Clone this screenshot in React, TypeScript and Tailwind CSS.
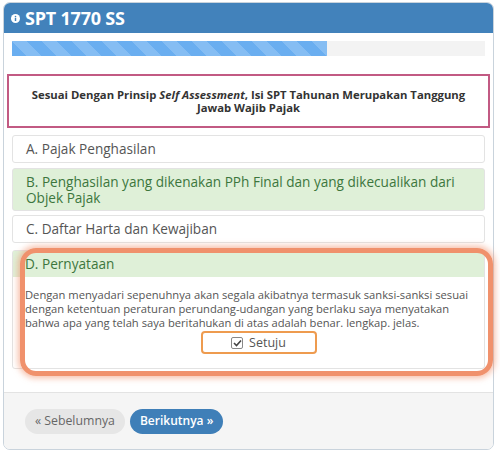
const rowBase = "border border-[#e3e3e3] rounded-[3px] px-[13px] text-[13.6px] leading-[16px]";

function InfoIcon() {
  return (
    <svg width="9" height="9" viewBox="0 0 10 10" className="mr-[5px] mt-[1px]">
      <circle cx="5" cy="5" r="5" fill="#ffffff" />
      <rect x="4.2" y="4.2" width="1.6" height="3.6" fill="#3f7fb8" />
      <circle cx="5" cy="2.8" r="0.9" fill="#3f7fb8" />
    </svg>
  );
}

export default function App() {
  return (
    <div className="relative w-[500px] h-[453px] bg-white overflow-hidden pt-[2px] pl-[3px] font-['Open_Sans',sans-serif]">
      <div className="w-[491px] h-[448px] border border-[#c9d3dc] rounded-[7px] flex flex-col overflow-hidden bg-white">
        <div className="h-[30px] bg-[#4282bb] flex items-center pl-[7px] text-white font-bold text-[18px] tracking-[-0.2px] shrink-0">
          <InfoIcon />
          SPT 1770 SS
        </div>

        <div className="flex-1 px-[3px]">
          <div className="mx-[5px] mt-[8px] h-[15px] bg-[#f3f3f3]">
            <div className="h-full w-[315px] bg-[#6aaef0] bg-[linear-gradient(45deg,rgba(255,255,255,.18)_25%,transparent_25%,transparent_50%,rgba(255,255,255,.18)_50%,rgba(255,255,255,.18)_75%,transparent_75%,transparent)] bg-size-[30px_30px]" />
          </div>

          <div className="mt-[18px] h-[54px] border-2 border-[#c25a83] flex flex-col items-center justify-center text-center text-[11.3px] leading-[13px] font-bold text-[#333]">
            <p>
              Sesuai Dengan Prinsip <i>Self Assessment</i>, Isi SPT Tahunan Merupakan Tanggung
            </p>
            <p>Jawab Wajib Pajak</p>
          </div>

          <div className="mx-[5px] mt-[7px] flex flex-col">
            <div className={`${rowBase} h-[28px] flex items-center bg-white text-[#555]`}>
              A. Pajak Penghasilan
            </div>
            <div className={`${rowBase} mt-[5px] h-[43px] flex flex-col justify-center bg-[#dff0d8] text-[#3c763d] leading-[16px]`}>
              <span>B. Penghasilan yang dikenakan PPh Final dan yang dikecualikan dari</span>
              <span>Objek Pajak</span>
            </div>
            <div className={`${rowBase} mt-[4px] h-[28px] flex items-center bg-white text-[#555]`}>
              C. Daftar Harta dan Kewajiban
            </div>
            <div className="mt-[7px] border border-[#e3e3e3] rounded-[3px]">
              <div className="h-[26px] flex items-center px-[12px] bg-[#dff0d8] text-[#3c763d] text-[13.6px]">
                D. Pernyataan
              </div>
              <div className="pl-[12px] pr-[6px] pt-[11px] pb-[14px] text-[11.2px] leading-[14px] text-[#555]">
                <p>
                  Dengan menyadari sepenuhnya akan segala akibatnya termasuk sanksi-sanksi sesuai dengan ketentuan peraturan
                  perundang-udangan yang berlaku saya menyatakan bahwa apa yang telah saya beritahukan di atas adalah benar.
                  lengkap. jelas.
                </p>
                <div className="flex justify-center pl-[14px] mt-[1px]">
                  <div className="w-[116px] h-[23px] border-2 border-[#ee9b4f] rounded-[4px] flex items-center justify-center gap-[6px] text-[12.5px] text-[#555]">
                    <span className="w-[12px] h-[12px] border border-[#888] rounded-[2px] flex items-center justify-center bg-white">
                      <svg width="9" height="8" viewBox="0 0 9 8">
                        <path d="M1 4 L3.5 6.5 L8 1.5" fill="none" stroke="#444" strokeWidth="1.6" />
                      </svg>
                    </span>
                    Setuju
                  </div>
                </div>
              </div>
            </div>
          </div>
        </div>

        <div className="h-[57px] shrink-0 bg-[#f5f5f5] border-t border-[#e3e3e3] flex items-center pl-[21px] gap-[5px]">
          <button className="h-[25px] px-[10px] rounded-full bg-[#e6e6e6] text-[12.3px] text-[#666]">
            « Sebelumnya
          </button>
          <button className="h-[25px] px-[10px] rounded-full bg-[#3f7fb8] text-[12px] font-semibold text-white">
            Berikutnya »
          </button>
        </div>
      </div>

      <div className="absolute left-[20px] top-[248px] w-[473px] h-[128px] border-[5px] border-[#f0916c] rounded-[16px] shadow-[0_0_6px_2px_rgba(240,145,108,0.6)] pointer-events-none" />
    </div>
  );
}
